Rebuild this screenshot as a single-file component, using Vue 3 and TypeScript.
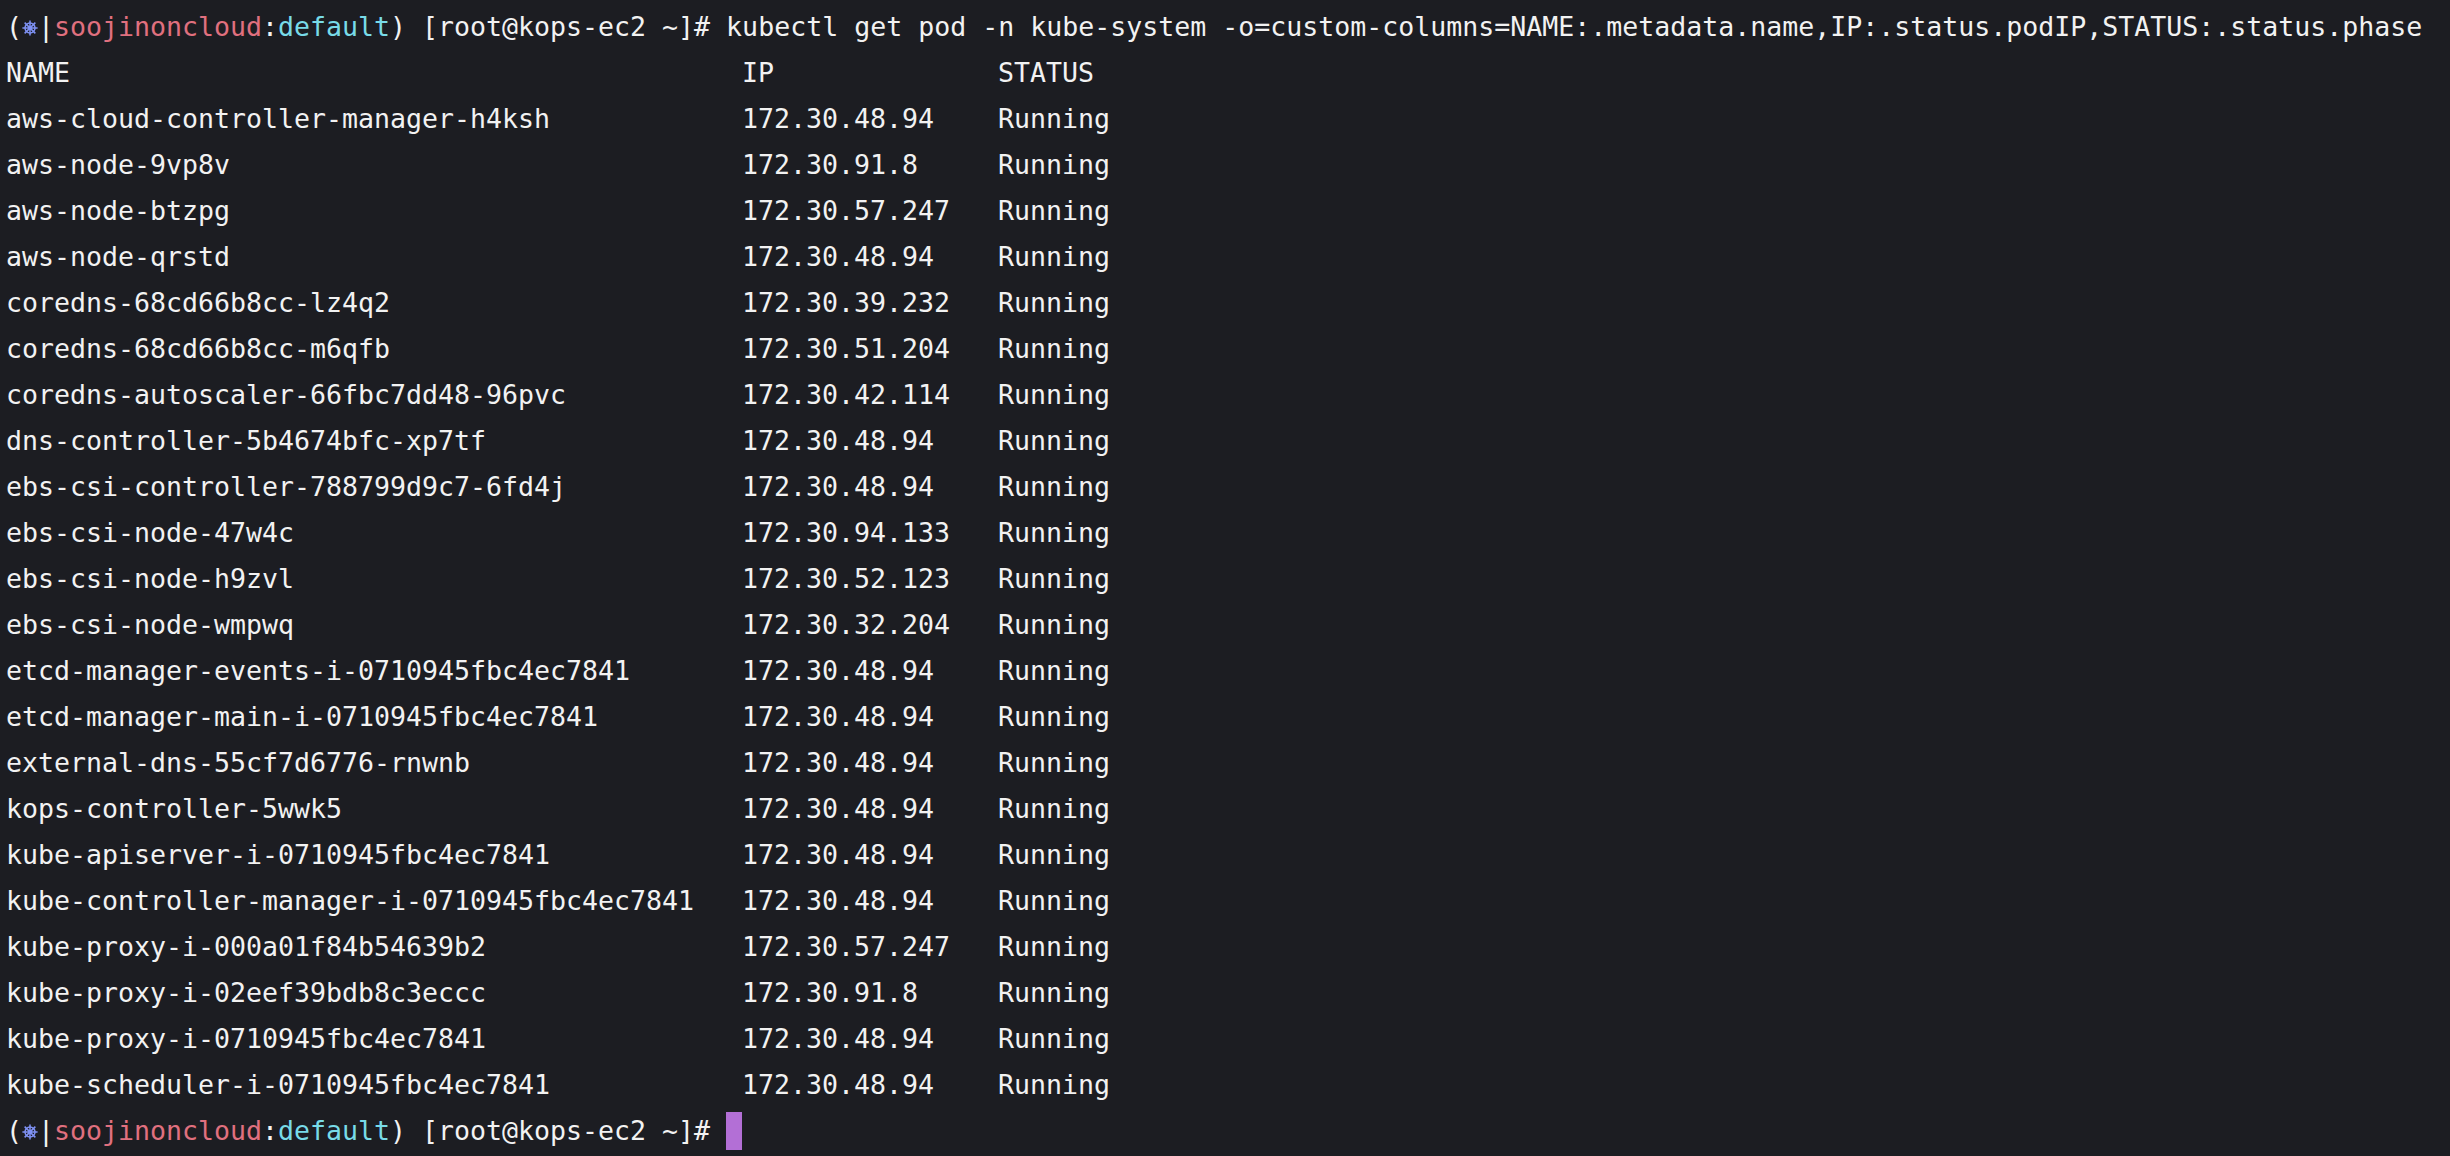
<script setup lang="ts">
interface Pod { name: string; ip: string; status: string }
const raw = `NAME|IP|STATUS
aws-cloud-controller-manager-h4ksh|172.30.48.94|Running
aws-node-9vp8v|172.30.91.8|Running
aws-node-btzpg|172.30.57.247|Running
aws-node-qrstd|172.30.48.94|Running
coredns-68cd66b8cc-lz4q2|172.30.39.232|Running
coredns-68cd66b8cc-m6qfb|172.30.51.204|Running
coredns-autoscaler-66fbc7dd48-96pvc|172.30.42.114|Running
dns-controller-5b4674bfc-xp7tf|172.30.48.94|Running
ebs-csi-controller-788799d9c7-6fd4j|172.30.48.94|Running
ebs-csi-node-47w4c|172.30.94.133|Running
ebs-csi-node-h9zvl|172.30.52.123|Running
ebs-csi-node-wmpwq|172.30.32.204|Running
etcd-manager-events-i-0710945fbc4ec7841|172.30.48.94|Running
etcd-manager-main-i-0710945fbc4ec7841|172.30.48.94|Running
external-dns-55cf7d6776-rnwnb|172.30.48.94|Running
kops-controller-5wwk5|172.30.48.94|Running
kube-apiserver-i-0710945fbc4ec7841|172.30.48.94|Running
kube-controller-manager-i-0710945fbc4ec7841|172.30.48.94|Running
kube-proxy-i-000a01f84b54639b2|172.30.57.247|Running
kube-proxy-i-02eef39bdb8c3eccc|172.30.91.8|Running
kube-proxy-i-0710945fbc4ec7841|172.30.48.94|Running
kube-scheduler-i-0710945fbc4ec7841|172.30.48.94|Running`
const rows: Pod[] = raw.split('\n').map((l) => {
  const [name, ip, status] = l.split('|')
  return { name, ip, status }
})
const spokes = [0, 45, 90, 135]
const command = 'kubectl get pod -n kube-system -o=custom-columns=NAME:.metadata.name,IP:.status.podIP,STATUS:.status.phase'
</script>

<template>
  <main class="term">
    <div class="line">
      <span>(</span>
      <svg class="helm" viewBox="0 0 16 16" aria-hidden="true">
        <circle cx="8" cy="8" r="5" />
        <circle cx="8" cy="8" r="1.5" />
        <line v-for="a in spokes" :key="a" x1="8" y1="0.4" x2="8" y2="15.6" :transform="`rotate(${a} 8 8)`" />
      </svg>
      <span>|</span><span class="pink">soojinoncloud</span><span>:</span><span class="cyan">default</span><span>) [root@kops-ec2 ~]# {{ command }}</span>
    </div>
    <div v-for="r in rows" :key="r.name" class="row">
      <span>{{ r.name }}</span>
      <span>{{ r.ip }}</span>
      <span>{{ r.status }}</span>
    </div>
    <div class="line">
      <span>(</span>
      <svg class="helm" viewBox="0 0 16 16" aria-hidden="true">
        <circle cx="8" cy="8" r="5" />
        <circle cx="8" cy="8" r="1.5" />
        <line v-for="a in spokes" :key="a" x1="8" y1="0.4" x2="8" y2="15.6" :transform="`rotate(${a} 8 8)`" />
      </svg>
      <span>|</span><span class="pink">soojinoncloud</span><span>:</span><span class="cyan">default</span><span>) [root@kops-ec2 ~]# </span><span class="cursor"></span>
    </div>
  </main>
</template>

<style scoped>
.term {
  box-sizing: border-box;
  width: 2450px;
  height: 1156px;
  overflow: hidden;
  padding: 4px 6px 0;
  background: #1c1d22;
  color: #f2f2f2;
  font-family: "DejaVu Sans Mono", monospace;
  font-size: 26.58px;
  line-height: 46px;
}
.line {
  display: flex;
  height: 46px;
  white-space: pre;
}
.row {
  display: grid;
  grid-template-columns: 736px 256px 1fr;
  height: 46px;
  white-space: pre;
}
.helm {
  flex: none;
  align-self: center;
  width: 16px;
  height: 16px;
  margin-top: 1px;
  fill: none;
  stroke: #7f92f5;
  stroke-width: 1.5;
}
.pink { color: #e0707f; }
.cyan { color: #78dbe8; }
.cursor {
  flex: none;
  align-self: center;
  width: 16px;
  height: 38px;
  background: #b36fd6;
}
</style>
